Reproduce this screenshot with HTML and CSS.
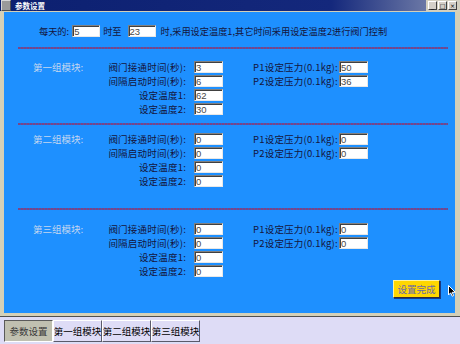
FILE: index.html
```html
<!DOCTYPE html>
<html lang="zh-CN">
<head>
  <meta charset="UTF-8">
  <title>参数设置</title>
  <link rel="stylesheet" href="styles.css">
</head>
<body>
  <div class="window">
    <div class="titlebar">
      <div class="sys-icon"></div>
      <div class="caption">参数设置</div>
      <div class="caption-buttons">
        <span class="cap-btn">_</span>
        <span class="cap-btn">□</span>
        <span class="cap-btn">×</span>
      </div>
    </div>

    <div class="client">
      <div class="top-row">
        <span>每天的:</span>
        <input class="field field-time" type="text" value="5">
        <span class="mid">时至</span>
        <input class="field" type="text" value="23">
        <span class="tail">时,采用设定温度1,其它时间采用设定温度2进行阀门控制</span>
      </div>

      <div class="divider first"></div>

      <!-- 第一组 -->
      <div class="section s1">
        <div class="section-name">第一组模块:</div>
        <div class="params">
          <span class="lbl">阀门接通时间(秒):</span><input class="field" type="text" value="3">
          <span class="lbl">间隔启动时间(秒):</span><input class="field" type="text" value="6">
          <span class="lbl">设定温度1:</span><input class="field" type="text" value="62">
          <span class="lbl">设定温度2:</span><input class="field" type="text" value="30">
        </div>
        <div class="params pressure">
          <span class="lbl">P1设定压力(0.1kg):</span><input class="field" type="text" value="50">
          <span class="lbl">P2设定压力(0.1kg):</span><input class="field" type="text" value="36">
        </div>
      </div>

      <div class="divider second"></div>

      <!-- 第二组 -->
      <div class="section s2">
        <div class="section-name">第二组模块:</div>
        <div class="params">
          <span class="lbl">阀门接通时间(秒):</span><input class="field" type="text" value="0">
          <span class="lbl">间隔启动时间(秒):</span><input class="field" type="text" value="0">
          <span class="lbl">设定温度1:</span><input class="field" type="text" value="0">
          <span class="lbl">设定温度2:</span><input class="field" type="text" value="0">
        </div>
        <div class="params pressure">
          <span class="lbl">P1设定压力(0.1kg):</span><input class="field" type="text" value="0">
          <span class="lbl">P2设定压力(0.1kg):</span><input class="field" type="text" value="0">
        </div>
      </div>

      <div class="divider third"></div>

      <!-- 第三组 -->
      <div class="section s3">
        <div class="section-name">第三组模块:</div>
        <div class="params">
          <span class="lbl">阀门接通时间(秒):</span><input class="field" type="text" value="0">
          <span class="lbl">间隔启动时间(秒):</span><input class="field" type="text" value="0">
          <span class="lbl">设定温度1:</span><input class="field" type="text" value="0">
          <span class="lbl">设定温度2:</span><input class="field" type="text" value="0">
        </div>
        <div class="params pressure">
          <span class="lbl">P1设定压力(0.1kg):</span><input class="field" type="text" value="0">
          <span class="lbl">P2设定压力(0.1kg):</span><input class="field" type="text" value="0">
        </div>
      </div>

      <div class="footer">
        <button class="done-button">设置完成</button>
      </div>

      <svg class="cursor" width="8" height="12" viewBox="0 0 8 12">
        <path d="M0.5 0.5 L0.5 10 L2.7 7.8 L4.2 11.2 L5.6 10.6 L4.2 7.3 L7.3 7.3 Z" fill="#000" stroke="#fff" stroke-width="1"/>
      </svg>
    </div>
  </div>

  <div class="tabs">
    <div class="tab active">参数设置</div>
    <div class="tab">第一组模块</div>
    <div class="tab">第二组模块</div>
    <div class="tab">第三组模块</div>
  </div>
</body>
</html>
```

FILE: styles.css
```css
/* Page */
body {
  margin: 0;
  width: 460px;
  height: 344px;
  overflow: hidden;
  background: #dedcf6;
  font-family: "Noto Sans CJK SC", sans-serif;
  font-size: 9.5px;
  color: #14143c;
}

/* Window frame */
.window {
  display: flex;
  flex-direction: column;
  height: 317px;
  box-sizing: border-box;
  background: #d4d0b8;
  border-bottom: 1px solid #505050;
}

.titlebar {
  display: flex;
  align-items: center;
  height: 11px;
  flex-shrink: 0;
  background: linear-gradient(to right, #0c2070 0%, #14287c 72%, #8a94b4 100%);
}

.sys-icon {
  width: 8px;
  height: 9px;
  margin: 0 4px 0 1px;
  background: #9a9a9a;
  border: 1px solid #d8d8d8;
  border-right-color: #505050;
  border-bottom-color: #505050;
}

.caption {
  flex: 1;
  color: #ffffff;
  font-weight: bold;
  font-size: 7.5px;
  line-height: 11px;
}

.caption-buttons {
  display: flex;
  align-items: center;
  gap: 1px;
  height: 11px;
  padding: 0 3px 0 2px;
  background: #d4d0c0;
}

.cap-btn {
  width: 7px;
  height: 7px;
  display: flex;
  align-items: center;
  justify-content: center;
  font-family: "DejaVu Sans", sans-serif;
  font-size: 6px;
  line-height: 7px;
  color: #000;
  background: #d4d0c8;
  border: 1px solid;
  border-color: #ffffff #404040 #404040 #ffffff;
}

/* Blue client area */
.client {
  position: relative;
  flex: 1;
  display: flex;
  flex-direction: column;
  margin: 1px 5px 3px 4px;
  padding-top: 13px;
  background: #1e90ff;
}

.top-row {
  display: flex;
  align-items: center;
  height: 12px;
  padding-left: 35px;
  font-size: 9.2px;
  white-space: nowrap;
}

.top-row .field {
  margin-left: 3px;
  width: 28px;
}

.top-row .mid {
  margin: 0 3px 0 3px;
}

.top-row .tail {
  margin-left: 5px;
}

.divider {
  height: 2px;
  margin: 0 7px 0 14px;
  background: repeating-linear-gradient(to right, #7c4488 0 2px, #4a5ab0 2px 3px);
}

.divider.first { margin-top: 10px; }
.divider.second { margin-top: 8px; }
.divider.third { margin-top: 21px; }

/* Module sections */
.section {
  display: flex;
  padding-left: 29px;
}

.section.s1 { margin-top: 12px; }
.section.s2 { margin-top: 8px; }
.section.s3 { margin-top: 13px; }

.section-name {
  width: 70px;
  line-height: 12px;
  color: #c4d6f0;
}

.params {
  display: grid;
  grid-template-columns: 91px 29px;
  grid-auto-rows: 12px;
  row-gap: 2px;
}

.params.pressure {
  grid-template-columns: 86px 29px;
  margin-left: 30px;
}

.lbl {
  text-align: right;
  padding-right: 8px;
  line-height: 12px;
  letter-spacing: 0.2px;
  white-space: nowrap;
}

.pressure .lbl {
  padding-right: 2px;
}

.field {
  box-sizing: border-box;
  width: 29px;
  height: 12px;
  margin: 0;
  padding: 0 0 0 1px;
  font-family: "Liberation Sans", sans-serif;
  font-size: 9.5px;
  color: #484848;
  background: #ffffff;
  border: 1px solid;
  border-color: #808080 #e8e8e8 #e8e8e8 #808080;
  box-shadow: inset 1px 1px 0 #404040;
  outline: none;
}

/* Done button */
.footer {
  display: flex;
  justify-content: flex-end;
  margin-top: 3px;
  padding-right: 15px;
}

.done-button {
  width: 47px;
  height: 18px;
  padding: 0;
  font-family: "Noto Sans CJK SC", sans-serif;
  font-size: 9.5px;
  color: #6a68a8;
  background: #ffd700;
  border: 1px solid;
  border-color: #fff4a0 #2a2a40 #2a2a40 #fff4a0;
  box-shadow: 1px 1px 0 #1a3a80;
}

.cursor {
  position: absolute;
  left: 444px;
  top: 273px;
}

/* Bottom tabs */
.tabs {
  display: flex;
  padding: 3px 0 0 4px;
}

.tab {
  box-sizing: border-box;
  width: 49px;
  height: 22px;
  display: flex;
  align-items: center;
  justify-content: center;
  color: #000;
  white-space: nowrap;
  border: 1px solid;
  border-color: #ffffff #5a5a6a #5a5a6a #ffffff;
}

.tab.active {
  background: #c0c0b0;
  color: #3a3a3a;
  border-color: #5a5a5a #ffffff #ffffff #5a5a5a;
}
```
